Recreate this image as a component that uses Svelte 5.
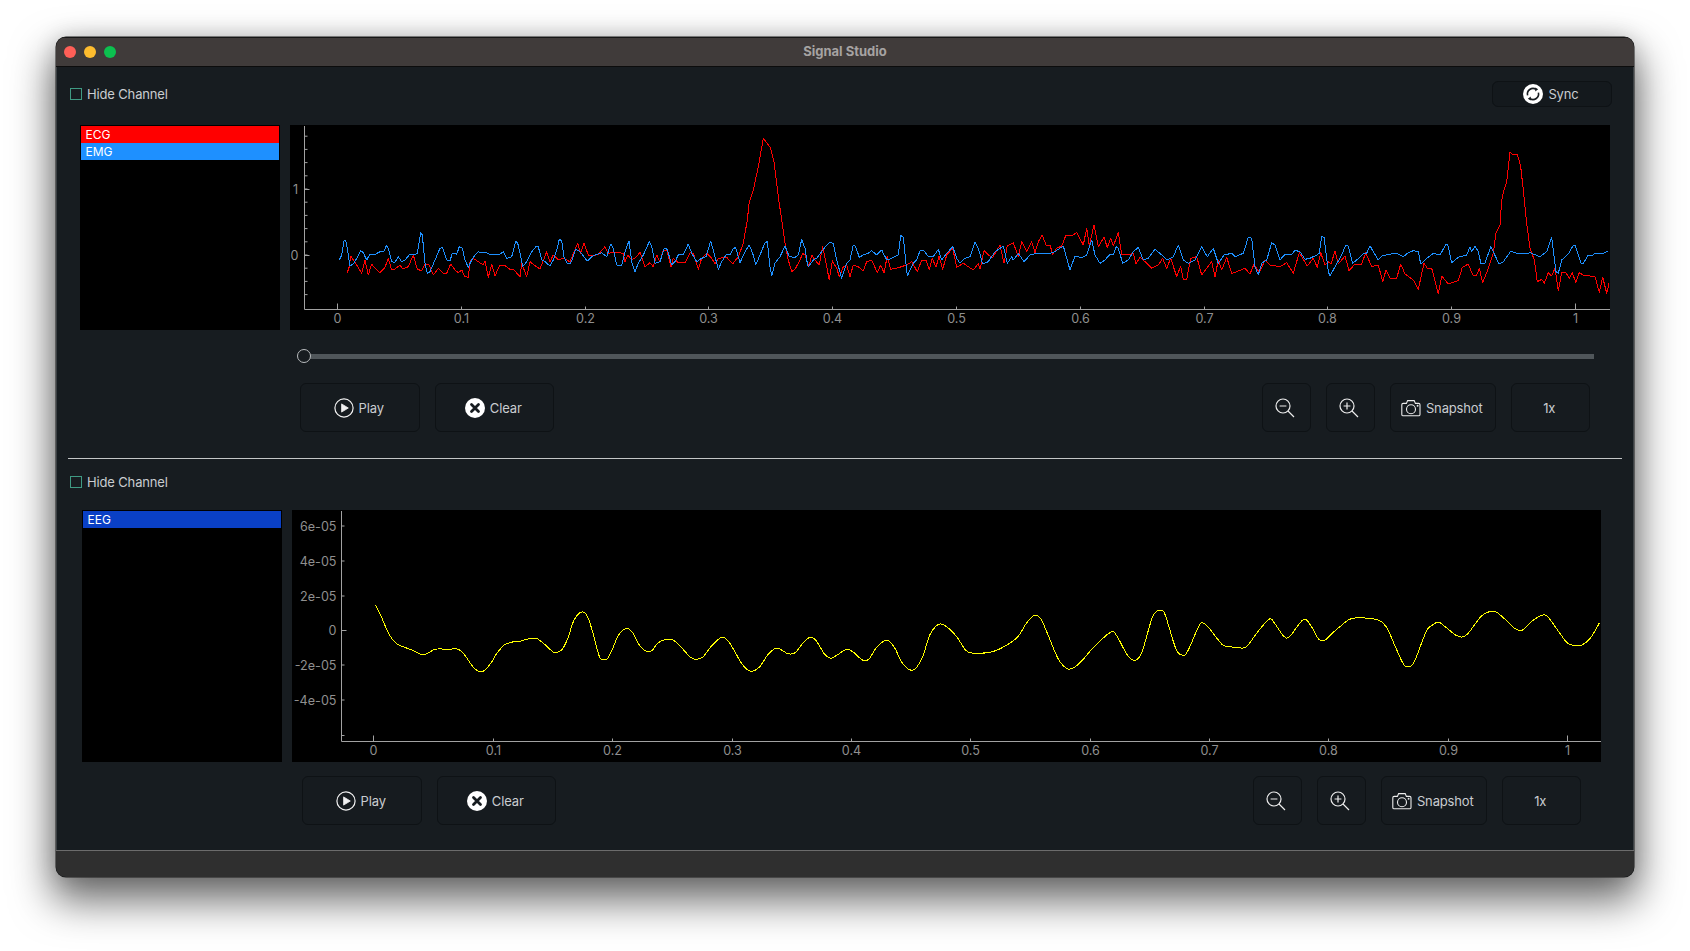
<script>
  const toPts = (groups) =>
    groups
      .flatMap(([ox, sx, oy, pts]) => pts.map(([x, y]) => `${(ox + x / sx).toFixed(1)},${(oy + y / 3).toFixed(1)}`))
      .join(' ');

  const smooth = (str) => {
    const p = str.split(' ').map((s) => s.split(',').map(Number));
    let d = `M${p[0][0]} ${p[0][1]}`;
    for (let i = 0; i < p.length - 1; i++) {
      const a = p[Math.max(i - 1, 0)], b = p[i], c = p[i + 1], e = p[Math.min(i + 2, p.length - 1)];
      const c1 = [b[0] + (c[0] - a[0]) / 6, b[1] + (c[1] - a[1]) / 6];
      const c2 = [c[0] - (e[0] - b[0]) / 6, c[1] - (e[1] - b[1]) / 6];
      d += `C${c1[0].toFixed(1)} ${c1[1].toFixed(1)} ${c2[0].toFixed(1)} ${c2[1].toFixed(1)} ${c[0]} ${c[1]}`;
    }
    return d;
  };

  const blue = toPts([
    [330, 3, 120, [[28,420],[35,405],[42,362],[47,362],[52,385],[60,438],[70,432],[80,415],[92,392],[100,398],[110,420],[120,402],[132,405],[150,395],[162,393],[170,375],[175,385],[185,425],[195,427],[205,410],[215,425],[225,420],[240,402],[255,405],[262,400],[272,338],[277,345],[285,430],[292,460],[300,455],[315,420],[330,385],[338,383],[350,420],[360,422],[367,400],[373,400],[380,403],[388,380],[397,385],[405,420],[415,442],[425,420],[435,405],[445,395],[455,398],[465,397],[480,403],[495,405],[510,402],[520,395],[530,415],[545,410],[558,362],[565,375],[578,440],[590,425],[605,395],[618,380],[625,380],[635,420],[645,425],[660,438],[670,420],[682,385],[688,358],[695,362],[702,410],[712,432],[722,430],[737,388],[750,395],[772,423],[785,410],[800,403],[815,398],[830,410],[842,372],[850,385],[860,435],[875,435],[885,395],[897,362],[905,425],[915,455],[925,430],[940,405],[958,365],[965,380],[975,430],[990,425],[1003,385],[1012,388],[1025,435],[1035,425],[1045,405],[1060,403],[1075,372],[1085,400],[1100,425],[1115,415],[1128,410],[1142,363],[1150,390],[1165,448],[1175,425],[1190,402],[1200,405],[1210,385],[1217,383],[1230,428],[1245,395],[1258,375],[1268,400],[1277,435],[1290,405],[1305,368],[1312,365],[1320,440],[1325,468],[1335,430],[1350,410],[1365,378],[1378,410],[1395,412],[1405,405],[1415,358],[1425,385],[1432,430]]],
    [800, 3, 120, [[25,440],[40,420],[50,415],[60,402],[75,382],[90,367],[100,370],[110,420],[125,475],[140,430],[150,420],[160,375],[167,380],[178,412],[190,405],[205,400],[215,392],[230,405],[245,390],[260,420],[275,415],[295,405],[302,346],[310,352],[322,468],[340,430],[350,420],[360,392],[370,390],[385,410],[400,410],[415,388],[425,420],[440,400],[458,380],[470,415],[480,430],[495,415],[510,410],[525,365],[535,385],[548,432],[565,425],[585,395],[600,385],[610,378],[622,430],[635,410],[640,420],[655,400],[672,425],[690,405],[710,400],[735,402],[760,398],[790,378],[810,450],[825,408],[845,413],[860,405],[875,360],[885,405],[900,430],[915,420],[930,403],[940,405],[948,380],[955,385],[968,430],[985,420],[1000,395],[1015,382],[1030,420],[1045,415],[1065,388],[1085,405],[1100,420],[1120,410],[1135,375],[1150,420],[1165,430],[1185,420],[1205,380],[1222,410],[1240,385],[1255,430],[1272,405],[1295,400],[1305,410],[1330,400],[1345,352],[1355,355],[1365,440],[1375,465],[1385,430],[1400,420],[1415,368],[1425,375],[1440,420]]],
    [1200, 3, 120, [[255,403],[275,403],[285,391],[300,395],[315,418],[330,415],[350,405],[358,400],[365,350],[372,352],[385,455],[390,468],[405,440],[425,405],[437,376],[445,378],[458,430],[470,420],[490,402],[500,400],[510,377],[520,395],[535,420],[545,408],[565,403],[590,400],[610,410],[625,398],[640,392],[655,395],[662,432],[680,415],[700,400],[720,405],[738,373],[743,373],[755,428],[775,412],[800,405],[810,380],[815,395],[825,378],[835,395],[843,432],[855,430],[872,380],[880,395],[897,432],[910,425],[932,394],[950,400],[975,402],[990,398],[1020,410],[1040,395],[1055,352],[1068,455],[1075,460],[1085,420],[1105,402],[1120,376],[1125,376],[1143,430],[1150,430],[1165,405],[1175,408],[1185,400],[1205,402],[1225,392]]]
  ]);

  const red = toPts([
    [330, 3, 120, [[52,458],[58,440],[62,408],[70,420],[80,435],[95,460],[105,420],[115,465],[125,432],[135,445],[150,458],[165,442],[175,415],[185,450],[195,447],[210,435],[218,447],[235,440],[250,405],[262,448],[275,452],[285,432],[297,435],[310,465],[325,445],[340,460],[350,460],[362,432],[375,450],[385,458],[395,450],[405,470],[415,472],[420,425],[430,415],[445,425],[460,435],[465,423],[475,472],[485,432],[495,468],[508,438],[525,437],[540,448],[552,450],[570,470],[575,430],[590,470],[600,425],[615,437],[630,447],[650,395],[660,425],[670,405],[685,420],[700,415],[720,425],[743,370],[752,400],[762,370],[775,405],[790,408],[805,403],[825,380],[835,400],[850,397],[865,398],[880,400],[885,425],[893,405],[905,420],[920,410],[930,397],[945,440],[960,428],[970,440],[980,405],[990,425],[1000,390],[1010,390],[1023,440],[1030,415],[1045,428],[1065,428],[1080,398],[1090,400],[1105,448],[1115,415],[1130,400],[1145,415],[1155,432],[1165,415],[1190,412],[1208,432],[1225,410],[1240,370],[1252,300],[1258,245],[1270,210],[1285,140],[1300,55],[1310,68],[1322,85],[1332,125],[1345,230],[1355,300],[1365,370],[1375,420],[1385,455],[1395,448],[1410,420],[1418,400],[1425,405],[1435,437]]],
    [800, 3, 120, [[30,425],[35,405],[45,420],[58,435],[68,378],[78,430],[88,480],[97,422],[110,445],[118,470],[130,440],[140,435],[150,470],[160,435],[175,440],[190,453],[200,425],[215,420],[232,458],[242,435],[252,458],[262,408],[272,448],[295,443],[320,435],[335,425],[352,455],[365,420],[378,420],[388,450],[397,415],[408,442],[417,408],[428,448],[440,405],[458,385],[470,442],[490,430],[520,450],[535,430],[540,448],[552,392],[565,405],[578,412],[600,375],[612,430],[622,378],[640,368],[655,410],[665,365],[680,395],[695,365],[705,398],[715,365],[727,345],[738,375],[750,375],[758,403],[770,385],[785,378],[798,345],[818,345],[830,338],[850,375],[860,325],[868,378],[882,315],[895,380],[912,352],[922,382],[932,355],[940,378],[955,338],[965,403],[985,405],[1000,400],[1008,432],[1020,412],[1035,425],[1055,445],[1075,435],[1088,415],[1100,445],[1112,415],[1130,470],[1142,438],[1150,478],[1160,478],[1172,415],[1190,410],[1205,465],[1220,445],[1235,425],[1245,470],[1255,420],[1265,450],[1280,412],[1295,460],[1310,455],[1335,445],[1350,462],[1362,432],[1378,458],[1395,420],[1410,435],[1440,440]]],
    [1200, 3, 120, [[260,428],[280,460],[298,398],[322,438],[340,415],[352,442],[362,398],[375,435],[385,425],[393,432],[405,393],[415,432],[435,408],[447,452],[465,432],[485,432],[497,398],[515,440],[535,435],[548,485],[558,450],[570,475],[590,475],[602,432],[615,462],[640,480],[655,508],[672,430],[682,445],[695,445],[715,522],[725,468],[745,492],[775,482],[787,442],[805,432],[818,465],[830,465],[838,445],[848,488],[865,445],[880,398],[888,340],[900,315],[905,240],[912,210],[920,185],[930,96],[940,105],[952,102],[962,140],[970,210],[980,310],[990,385],[1003,420],[1012,485],[1025,478],[1033,490],[1045,458],[1055,468],[1065,445],[1075,512],[1085,458],[1098,458],[1108,475],[1117,458],[1127,487],[1138,458],[1150,465],[1185,470],[1198,517],[1208,472],[1220,520],[1227,490]]]
  ]);

  const eeg = smooth(toPts([
    [330, 2.376, 560, [[108,136],[122,170],[140,222],[157,250],[175,261],[195,270],[222,284],[250,268],[278,268],[305,268],[320,285],[338,318],[352,333],[365,333],[382,310],[395,283],[413,256],[430,247],[450,244],[478,235],[492,236],[510,253],[530,276],[540,277],[552,268],[565,235],[580,180],[598,156],[612,170],[625,220],[640,290],[650,298],[660,295],[672,265],[686,225],[705,205],[720,220],[735,255],[750,273],[765,272],[778,250],[800,238],[815,240],[830,255],[855,290],[868,298],[885,292],[905,260],[930,232],[945,242],[960,270],[975,305],[990,328],[1002,334],[1020,322],[1040,285],[1058,265],[1070,268],[1088,281],[1105,278],[1120,255],[1140,232],[1155,242],[1175,282],[1190,295],[1205,285],[1228,268],[1245,278],[1265,300],[1280,298],[1300,260],[1323,241],[1340,260],[1358,305],[1375,328],[1390,327],[1408,290],[1425,225],[1440,198],[1452,192],[1470,205],[1490,232],[1510,270],[1525,279],[1555,279]]],
    [980, 2.376, 560, [[0,280],[30,275],[60,258],[90,230],[110,190],[130,166],[145,178],[165,235],[185,295],[205,325],[220,325],[240,305],[270,262],[310,217],[325,228],[350,285],[368,301],[385,275],[410,170],[428,151],[440,165],[465,265],[482,286],[495,270],[520,198],[532,190],[548,210],[575,253],[590,259],[620,264],[635,258],[660,215],[688,177],[700,190],[722,229],[736,229],[768,179],[785,195],[805,238],[820,240],[835,222],[860,195],[885,175],[940,178],[965,200],[985,255],[1005,310],[1017,320],[1032,305],[1060,215],[1075,195],[1090,187],[1105,200],[1130,225],[1145,231],[1160,220],[1190,170],[1210,155],[1225,155],[1245,175],[1270,205],[1288,211],[1310,185],[1335,166],[1350,172],[1375,215],[1395,248],[1410,256],[1430,255],[1450,235],[1472,188]]]
  ]));

  const xLabels = ['0', '0.1', '0.2', '0.3', '0.4', '0.5', '0.6', '0.7', '0.8', '0.9', '1'];
  const range = (n) => Array.from({ length: n }, (_, i) => i);
  const top = { x0: 337, dx: 123.8, axisX: 304.5, axisY: 309.5 };
  const bot = { x0: 373.4, dx: 119.37, axisX: 341.5, axisY: 741.5 };
  const topMinor = range(13).map((i) => 136.2 + i * 13.2);
  const yBot = [['6e-05', 526], ['4e-05', 561], ['2e-05', 596], ['0', 630.5], ['-2e-05', 665], ['-4e-05', 700]];
</script>

{#snippet toolbar(cls)}
  <div class="toolbar {cls}">
    <button class="btn wide">
      <svg width="20" height="20" viewBox="0 0 20 20"><circle cx="10" cy="10" r="9.1" fill="none" stroke="#f2f2f2" stroke-width="1.2"/><path d="M7.6 5.9 14.3 10 7.6 14.1Z" fill="#f2f2f2" stroke="#f2f2f2" stroke-width=".8" stroke-linejoin="round"/></svg>
      Play
    </button>
    <button class="btn wide">
      <svg width="20" height="20" viewBox="0 0 20 20"><circle cx="10" cy="10" r="10" fill="#fff"/><path d="M6.5 6.5 13.5 13.5M13.5 6.5 6.5 13.5" stroke="#171c20" stroke-width="2.8" stroke-linecap="round"/></svg>
      Clear
    </button>
    <div class="right">
      <button class="btn square" aria-label="Zoom out">
        <svg width="20" height="20" viewBox="0 0 20 20" fill="none" stroke="#ededed" stroke-width="1.2"><circle cx="8" cy="8" r="7"/><path d="M4.6 8H11.4M13 13 19 19"/></svg>
      </button>
      <button class="btn square" aria-label="Zoom in">
        <svg width="20" height="20" viewBox="0 0 20 20" fill="none" stroke="#ededed" stroke-width="1.2"><circle cx="8" cy="8" r="7"/><path d="M4.6 8H11.4M8 4.6V11.4M13 13 19 19"/></svg>
      </button>
      <button class="btn snap">
        <svg width="20" height="18" viewBox="0 0 20 18" fill="none" stroke="#ededed" stroke-width="1.1"><path d="M2.2 4.4H5.4L6.6 1.6H13.2L14.4 4.4H17.6A1.4 1.4 0 0 1 19 5.8V15.4A1.4 1.4 0 0 1 17.6 16.8H2.2A1.4 1.4 0 0 1 .8 15.4V5.8A1.4 1.4 0 0 1 2.2 4.4Z"/><circle cx="10" cy="10.2" r="4.5"/><circle cx="16.6" cy="6.8" r=".4"/></svg>
        Snapshot
      </button>
      <button class="btn rate">1x</button>
    </div>
  </div>
{/snippet}

<div class="window">
  <header class="titlebar">
    <div class="lights"><i class="red"></i><i class="yellow"></i><i class="green"></i></div>
    <span class="title">Signal Studio</span>
  </header>

  <main class="main">
    <div class="head head-top">
      <label class="check"><input type="checkbox" /> Hide Channel</label>
      <button class="btn sync">
        <svg width="20" height="20" viewBox="0 0 20 20"><circle cx="10" cy="10" r="10" fill="#fff"/><g fill="none" stroke="#171c20" stroke-width="1.6"><path d="M4.6 11.4A5.6 5.6 0 0 1 13 5.3"/><path d="M15.4 8.6A5.6 5.6 0 0 1 7 14.7"/></g><path d="M12.2 3.4 15.2 5.2 12.2 7.4Z M7.8 16.6 4.8 14.8 7.8 12.6Z" fill="#171c20"/></svg>
        Sync
      </button>
    </div>

    <div class="plots plots-top">
      <ul class="channels">
        <li class="ecg">ECG</li>
        <li class="emg">EMG</li>
      </ul>
      <svg class="plot plot-top" viewBox="290 125 1320 205">
        <path class="axis" d="M{top.axisX} 126V{top.axisY}H1610"/>
        {#each topMinor as y}<path class="axis" d="M{top.axisX} {y.toFixed(1)}h3"/>{/each}
        <path class="axis" d="M{top.axisX} 189.5h5M{top.axisX} 255.5h5"/>
        {#each xLabels as label, i}
          {@const x = Math.round(top.x0 + i * top.dx) + 0.5}
          <path class="axis" d="M{x} {top.axisY}v{i === 0 || i === 10 ? -6 : -3}"/>
          <text class="tick" {x} y="323" text-anchor="middle">{label}</text>
        {/each}
        <text class="tick" x="298" y="194" text-anchor="end">1</text>
        <text class="tick" x="298.5" y="260" text-anchor="end">0</text>
        <polyline class="trace" stroke="#ff0000" points={red} />
        <polyline class="trace" stroke="#1e90ff" points={blue} />
      </svg>
    </div>

    <div class="slider"><span class="thumb"></span></div>

    {@render toolbar('tb-top')}

    <hr class="sep" />

    <div class="head head-bottom">
      <label class="check"><input type="checkbox" /> Hide Channel</label>
    </div>

    <div class="plots plots-bottom">
      <ul class="channels">
        <li class="eeg">EEG</li>
      </ul>
      <svg class="plot plot-bottom" viewBox="292 510 1309 252">
        <path class="axis" d="M{bot.axisX} 511V{bot.axisY}H1601"/>
        {#each yBot as [label, y]}
          <path class="axis" d="M{bot.axisX} {y}h{label === '0' ? 5 : 3}"/>
          <text class="tick" x="336.5" y={y + 4.5} text-anchor="end">{label}</text>
        {/each}
        <path class="axis" d="M{bot.axisX} 735.5h3"/>
        {#each xLabels as label, i}
          {@const x = Math.round(bot.x0 + i * bot.dx) + 0.5}
          <path class="axis" d="M{x} {bot.axisY}v{i === 0 || i === 10 ? -6 : -3}"/>
          <text class="tick" {x} y="755" text-anchor="middle">{label}</text>
        {/each}
        <path class="trace" stroke="#ffff00" d={eeg} />
      </svg>
    </div>

    {@render toolbar('tb-bottom')}
  </main>

  <footer class="status"></footer>
</div>

<style>
  :global(html) {
    background: #fff;
    overflow: hidden;
  }
  :global(body) {
    margin: 0;
    min-height: 951px;
  }
  .window {
    box-sizing: border-box;
    width: 1578px;
    height: 840px;
    margin: 37px 0 0 56px;
    display: flex;
    flex-direction: column;
    border-radius: 10px;
    overflow: hidden;
    background: #171c20;
    box-shadow: 0 0 0 .5px #1c1c1c, 0 20px 40px 4px rgba(0, 0, 0, 0.58), 0 0 22px rgba(0, 0, 0, 0.14);
    font-family: Inter, "Liberation Sans", sans-serif;
    color: #c9ccd0;
    font-size: 13px;
    letter-spacing: -0.15px;
  }
  .titlebar {
    box-sizing: border-box;
    flex: none;
    height: 30px;
    display: flex;
    align-items: center;
    justify-content: center;
    position: relative;
    background: #403b3a;
    border-top: 1px solid #161616;
    border-bottom: 1px solid #0c0c0c;
  }
  .lights {
    position: absolute;
    left: 8px;
    top: 8px;
    display: flex;
    gap: 8px;
  }
  .lights i {
    width: 12px;
    height: 12px;
    border-radius: 50%;
  }
  .red { background: #ff5f57; }
  .yellow { background: #febc2e; }
  .green { background: #0cc04f; }
  .title {
    font-size: 13px;
    font-weight: 700;
    letter-spacing: 0;
    color: #a6a3a2;
    transform: translateY(-1px);
  }
  .main {
    flex: 1;
    min-height: 0;
    display: flex;
    flex-direction: column;
    box-shadow: inset 1px 0 0 #3c4144, inset -1px 0 0 #3c4144;
  }
  .head {
    flex: none;
    height: 26px;
    display: flex;
    align-items: center;
    justify-content: space-between;
    margin: 0 22px 0 14px;
  }
  .head-top { margin-top: 14px; }
  .head-bottom { margin-top: 10px; }
  .check {
    display: flex;
    align-items: center;
    gap: 5px;
    line-height: 1;
  }
  .check input {
    appearance: none;
    box-sizing: border-box;
    width: 12px;
    height: 12px;
    margin: 0;
    border: 1px solid #3f9a83;
    background: transparent;
    border-radius: 0;
  }
  .btn {
    box-sizing: border-box;
    display: flex;
    align-items: center;
    justify-content: center;
    gap: 5px;
    height: 49px;
    padding: 0 2px 0 0;
    background: #161b1f;
    border: 1px solid #0e1215;
    border-radius: 6px;
    color: #c9ccd0;
    font: inherit;
    letter-spacing: inherit;
  }
  .sync {
    width: 120px;
    height: 26px;
    background: #14191d;
  }
  .plots {
    flex: none;
    display: flex;
    gap: 10px;
  }
  .plots-top {
    margin-top: 18px;
    height: 205px;
    padding-left: 24px;
  }
  .plots-bottom {
    margin-top: 15px;
    height: 252px;
    padding-left: 26px;
  }
  .channels {
    box-sizing: border-box;
    width: 200px;
    height: 100%;
    margin: 0;
    padding: 1px;
    list-style: none;
    background: #000;
    letter-spacing: 0;
  }
  .channels li {
    height: 17px;
    line-height: 17px;
    padding-left: 4.5px;
    font-size: 12px;
    color: #fff;
  }
  .ecg { background: #ff0000; }
  .emg { background: #1e90ff; }
  .eeg { background: #0a40c5; }
  .plot {
    display: block;
    background: #000;
    height: 100%;
    letter-spacing: 0;
  }
  .plot-top { width: 1320px; }
  .plot-bottom { width: 1309px; }
  .axis {
    fill: none;
    stroke: #a2a2a2;
    stroke-width: 1;
  }
  .tick {
    fill: #8f8f8f;
    font-size: 12.6px;
    font-family: Inter, "Liberation Sans", sans-serif;
  }
  .trace {
    fill: none;
    stroke-width: 1;
    stroke-linejoin: round;
    shape-rendering: crispEdges;
  }
  .slider {
    flex: none;
    position: relative;
    height: 14px;
    width: 1290px;
    margin: 19px 0 0 248px;
    display: flex;
    align-items: center;
  }
  .slider::before {
    content: '';
    flex: 1;
    height: 5px;
    background: #50565a;
  }
  .thumb {
    box-sizing: border-box;
    position: absolute;
    left: -7px;
    top: 0;
    width: 14px;
    height: 14px;
    border-radius: 50%;
    border: 1px solid #b9bcbe;
    background: #171c20;
  }
  .toolbar {
    flex: none;
    display: flex;
    gap: 15px;
  }
  .tb-top { margin: 20px 44px 0 244px; }
  .tb-bottom { margin: 14px 53px 0 246px; }
  .right {
    margin-left: auto;
    display: flex;
    gap: 14.5px;
  }
  .wide { width: 119.5px; }
  .square { width: 49.5px; }
  .snap { width: 106.5px; }
  .rate { width: 79.5px; }
  .sep {
    flex: none;
    height: 1px;
    margin: 26px 12px 0;
    border: 0;
    background: #c4c6c7;
  }
  .status {
    box-sizing: border-box;
    flex: none;
    height: 27px;
    background: #2f2f2f;
    border-top: 1px solid #6c6c6c;
  }
</style>
